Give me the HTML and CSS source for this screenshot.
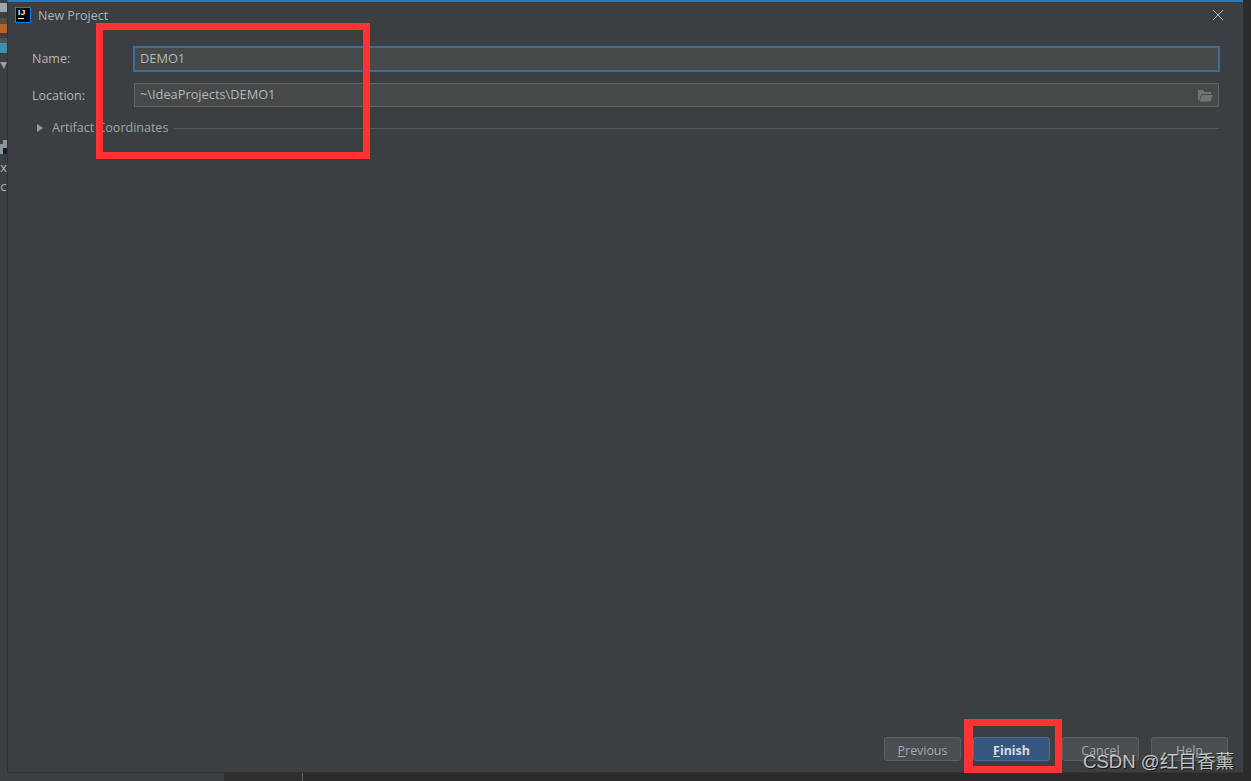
FILE: index.html
```html
<!DOCTYPE html>
<html lang="en">
<head>
    <meta charset="UTF-8">
    <title>New Project</title>
    <link rel="stylesheet" href="styles.css">
</head>
<body>
    <div class="desktop">
        <div class="side-strip">
            <div class="side-folder side-gray"></div>
            <div class="side-folder side-orange"></div>
            <div class="side-folder side-blue"></div>
            <div class="side-arrow"></div>
            <div class="side-module"><span class="side-module-notch"></span><span class="side-module-badge"></span></div>
            <div class="side-text side-text-first">Ex</div>
            <div class="side-text">Sc</div>
        </div>

        <div class="dialog">
            <div class="title-bar">
                <div class="app-icon"><span class="app-icon-text">IJ</span><span class="app-icon-line"></span></div>
                <span class="title-text">New Project</span>
                <svg class="close-icon" width="12" height="12" viewBox="0 0 12 12">
                    <path d="M1 1L11 11M11 1L1 11" stroke="#b4b8ba" stroke-width="1" fill="none"/>
                </svg>
            </div>

            <div class="form">
                <label class="form-label form-label-name">Name:</label>
                <div class="text-input text-input-focus">DEMO1</div>
                <label class="form-label">Location:</label>
                <div class="text-input">
                    ~\IdeaProjects\DEMO1
                    <svg class="folder-icon" width="16" height="13" viewBox="0 0 16 13">
                        <path d="M1 1H6L7.5 3H14V5H4.5L2 11.5H1Z" fill="#6f7577"/>
                        <path d="M5 6H16L13.5 12.5H2.5Z" fill="#6f7577"/>
                    </svg>
                </div>
            </div>

            <div class="artifact-row">
                <span class="artifact-arrow"></span>
                <span class="artifact-text">Artifact Coordinates</span>
                <span class="artifact-line"></span>
            </div>

            <div class="button-row">
                <button class="btn"><u>P</u>revious</button>
                <button class="btn btn-primary"><u>F</u>inish</button>
                <button class="btn">Cancel</button>
                <button class="btn">Help</button>
            </div>
        </div>

        <div class="right-strip"></div>

        <div class="bottom-strip">
            <div class="bottom-light"></div>
            <div class="bottom-dark"></div>
            <div class="bottom-dark-rest"></div>
        </div>

        <div class="red-box red-box-form"></div>
        <div class="red-box red-box-finish"></div>
        <div class="watermark">CSDN @红目香薰</div>
    </div>
</body>
</html>
```

FILE: styles.css
```css
body {
    margin: 0;
    background: #2b2b2b;
    font-family: "Open Sans", "Noto Sans", sans-serif;
}
.desktop {
    position: relative;
    width: 1251px;
    height: 781px;
    overflow: hidden;
    display: grid;
    grid-template-columns: 7px 1fr 8px;
    grid-template-rows: 773px 8px;
}

/* bit of the IDE left visible behind the dialog */
.side-strip {
    background: #3c3f41;
    overflow: hidden;
    padding-top: 3px;
}
.side-folder {
    height: 9px;
}
.side-gray {
    background: #9aa7b0;
}
.side-orange {
    height: 9px;
    margin-top: 12px;
    background: #b9622b;
    box-shadow: 0 -6px 0 #564c3c;
}
.side-blue {
    height: 10px;
    margin-top: 10px;
    background: #3d8ead;
    box-shadow: 0 -5px 0 #4a5557;
}
.side-arrow {
    width: 0;
    height: 0;
    margin-top: 9px;
    border-left: 4px solid transparent;
    border-right: 3px solid transparent;
    border-top: 7px solid #9a9da0;
}
.side-module {
    position: relative;
    width: 7px;
    height: 14px;
    margin-top: 71px;
    background: #8b979f;
}
.side-module-notch {
    position: absolute;
    left: 0;
    top: 0;
    width: 3px;
    height: 4px;
    background: #3c3f41;
}
.side-module-badge {
    position: absolute;
    right: 0;
    bottom: 0;
    width: 4px;
    height: 6px;
    background: #1c1c1c;
}
.side-text {
    margin-top: 4px;
    margin-left: -7px;
    font-size: 13px;
    line-height: 15px;
    color: #b0b3b5;
    white-space: nowrap;
}
.side-text-first {
    margin-top: 6px;
}

.dialog {
    background: #3c3f41;
    border-top: 2px solid #1a7fd6;
    border-left: 1px solid #303335;
    border-bottom: 1px solid #303335;
    display: flex;
    flex-direction: column;
    padding: 0 24px 0 24px;
    position: relative;
}
.title-bar {
    height: 26px;
    margin-left: -17px;
    margin-right: -24px;
    box-sizing: border-box;
    display: flex;
    align-items: center;
    gap: 7px;
    padding-right: 19px;
}
.app-icon {
    width: 16px;
    height: 16px;
    box-sizing: border-box;
    border: 1px solid #0a7ff0;
    background: #000;
    position: relative;
    flex: none;
}
.app-icon-text {
    position: absolute;
    left: 2px;
    top: 0;
    font-family: "Liberation Sans", sans-serif;
    font-size: 8px;
    font-weight: bold;
    line-height: 9px;
    letter-spacing: 0.5px;
    color: #fff;
}
.app-icon-line {
    position: absolute;
    left: 2px;
    top: 10px;
    width: 6px;
    height: 1px;
    background: #fff;
}
.title-text {
    font-size: 12.5px;
    color: #afb1b3;
    flex: 1;
}
.close-icon {
    flex: none;
}

.form {
    display: grid;
    grid-template-columns: 102px 1fr;
    row-gap: 12px;
    align-items: center;
    margin-top: 19px;
}
.form-label {
    font-size: 12.5px;
    color: #b4b6b8;
}
.form-label-name {
    margin-top: -1px;
}
.text-input {
    height: 24px;
    box-sizing: border-box;
    border: 1px solid #646464;
    background: #45494a;
    color: #b4b6b8;
    font-size: 12.8px;
    line-height: 20px;
    padding-left: 5px;
    position: relative;
}
.text-input-focus {
    border-color: #3f6b97;
    box-shadow: 0 0 0 1px #3f6b97;
}
.folder-icon {
    position: absolute;
    right: 5px;
    top: 5px;
}

.artifact-row {
    display: flex;
    align-items: center;
    height: 18px;
    margin-top: 12px;
    padding-left: 5px;
}
.artifact-arrow {
    width: 0;
    height: 0;
    border-top: 4px solid transparent;
    border-bottom: 4px solid transparent;
    border-left: 6px solid #9a9da0;
    margin-right: 9px;
}
.artifact-text {
    font-size: 12.5px;
    color: #a2a4a6;
    margin-top: -2px;
}
.artifact-line {
    flex: 1;
    height: 1px;
    background: #535557;
    margin-left: 6px;
}

.button-row {
    margin-top: auto;
    margin-bottom: 11px;
    margin-right: -9px;
    display: flex;
    justify-content: flex-end;
    gap: 12px;
}
.btn {
    width: 77px;
    height: 24px;
    padding: 2px 0 0;
    box-sizing: border-box;
    border: 1px solid #5c5f60;
    border-radius: 3px;
    background: #4a4e50;
    color: #a8aaac;
    font-family: "Open Sans", "Noto Sans", sans-serif;
    font-size: 12.4px;
}
.btn-primary {
    background: #365880;
    border-color: #4c708c;
    color: #d6dde4;
    font-weight: bold;
}

.right-strip {
    background: #2b2b2b;
}
.bottom-strip {
    grid-column: 1 / 4;
    display: flex;
}
.bottom-light {
    width: 224px;
    background: #3c3f41;
}
.bottom-dark {
    width: 78px;
    background: #2f2f2f;
    border-right: 1px solid #646464;
}
.bottom-dark-rest {
    flex: 1;
    background: #2b2b2b;
}

/* annotations drawn on top of the screenshot */
.red-box {
    position: absolute;
    box-sizing: border-box;
    border: 7px solid #ff3333;
}
.red-box-form {
    left: 96px;
    top: 23px;
    width: 274px;
    height: 136px;
}
.red-box-finish {
    left: 964px;
    top: 719px;
    width: 98px;
    height: 54px;
    border-left-width: 9px;
}
.watermark {
    position: absolute;
    left: 1083px;
    top: 750px;
    font-family: "Liberation Sans", "Noto Sans CJK SC", sans-serif;
    font-size: 18.6px;
    line-height: 24px;
    white-space: nowrap;
    color: rgba(255, 255, 255, 0.72);
    text-shadow: 1px 1px 1px rgba(0, 0, 0, 0.7);
}
```
